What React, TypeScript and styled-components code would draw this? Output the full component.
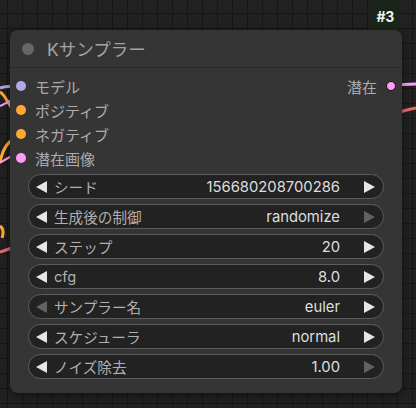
import React from "react";
import styled, { createGlobalStyle } from "styled-components";

const GlobalStyle = createGlobalStyle`
  html, body {
    margin: 0;
    padding: 0;
    background: #202020;
  }
  body {
    font-family: "Inter", "Noto Sans CJK JP", sans-serif;
  }
`;

const Canvas = styled.div`
  position: relative;
  width: 416px;
  height: 408px;
  overflow: hidden;
  box-sizing: border-box;
  padding: 30px 14px 0 10px;
  background-color: #212121;
  background-image:
    linear-gradient(#161616 1px, transparent 1px),
    linear-gradient(90deg, #161616 1px, transparent 1px);
  background-size: 15px 15px;
  background-position: -8px -2px;
`;

const Wires = styled.svg`
  position: absolute;
  left: 0;
  top: 0;
  pointer-events: none;
`;

const Badge = styled.div`
  position: absolute;
  top: 2px;
  right: 17px;
  padding: 5px;
  background: #182518;
  border-radius: 4px 4px 0 0;
  color: #f2f2f2;
  font-size: 14px;
  font-weight: 700;
  line-height: 19px;
  letter-spacing: -0.3px;
`;

const Node = styled.div`
  position: relative;
  width: 392px;
  background: #353535;
  border-radius: 8px;
  box-shadow: 0 2px 8px rgba(0, 0, 0, 0.5);
  padding-bottom: 14px;
`;

const TitleBar = styled.div`
  height: 37px;
  display: flex;
  align-items: center;
  gap: 13px;
  padding-left: 12px;
  border-bottom: 1px solid #2a2a2a;
`;

const TitleDot = styled.span`
  width: 12px;
  height: 12px;
  border-radius: 50%;
  background: #666;
`;

const TitleText = styled.span`
  color: #a3a3a3;
  font-size: 17.5px;
`;

const Slots = styled.div`
  padding-top: 6px;
`;

const SlotRow = styled.div`
  height: 24px;
  display: flex;
  align-items: center;
  justify-content: space-between;
  padding: 0 6px;
`;

const Slot = styled.div`
  display: flex;
  align-items: center;
  gap: 9px;
  color: #ababab;
  font-size: 15px;
`;

const Dot = styled.span<{ $color: string; $outlined?: boolean }>`
  width: 10px;
  height: 10px;
  border-radius: 50%;
  background: ${(p) => p.$color};
  box-sizing: border-box;
  border: ${(p) => (p.$outlined ? "1px solid #111" : "none")};
`;

const Widgets = styled.div`
  display: flex;
  flex-direction: column;
  gap: 5px;
  padding: 4px 18px 0;
`;

const Widget = styled.div`
  height: 25px;
  box-sizing: border-box;
  display: flex;
  align-items: center;
  border: 1px solid #5c5c5c;
  border-radius: 13px;
  background: #222;
  padding: 0 8px 0 7px;
`;

const Arrow = styled.span<{ $dim?: boolean; $right?: boolean }>`
  width: 0;
  height: 0;
  border-top: 6px solid transparent;
  border-bottom: 6px solid transparent;
  ${(p) =>
    p.$right
      ? `border-left: 11px solid ${p.$dim ? "#626262" : "#e6e6e6"};`
      : `border-right: 11px solid ${p.$dim ? "#626262" : "#e6e6e6"};`}
`;

const Label = styled.span`
  color: #b0b0b0;
  font-size: 14.6px;
  margin-left: 7px;
  flex: 1;
`;

const Value = styled.span`
  color: #dedede;
  font-size: 14.8px;
  margin-right: 24px;
`;

type WidgetRow = {
  label: string;
  value: string;
  leftDim?: boolean;
  rightDim?: boolean;
};

const widgets: WidgetRow[] = [
  { label: "シード", value: "156680208700286" },
  { label: "生成後の制御", value: "randomize", rightDim: true },
  { label: "ステップ", value: "20" },
  { label: "cfg", value: "8.0" },
  { label: "サンプラー名", value: "euler", leftDim: true },
  { label: "スケジューラ", value: "normal" },
  { label: "ノイズ除去", value: "1.00", rightDim: true },
];

const inputs = [
  { name: "モデル", color: "#b7a7e8" },
  { name: "ポジティブ", color: "#ffa931" },
  { name: "ネガティブ", color: "#ffa931" },
  { name: "潜在画像", color: "#ff9cf9" },
];

export default function App() {
  return (
    <Canvas>
      <GlobalStyle />
      <Wires width={416} height={408}>
        <path d="M0 88 C6 86 12 86 21 86" stroke="#b7a7e8" strokeWidth="3" fill="none" />
        <path d="M0 92 C6 96 8 104 12 108" stroke="#ffa931" strokeWidth="3" fill="none" />
        <path d="M12 140 C4 146 2 154 0 162" stroke="#ffa931" strokeWidth="3" fill="none" />
        <path d="M0 106 C4 104 8 102 12 100" stroke="#ff9cf9" strokeWidth="2" fill="none" />
        <path d="M0 163 C4 160 8 158 12 156" stroke="#ff9cf9" strokeWidth="2" fill="none" />
        <path d="M0 226 C3 228 4 232 2 238" stroke="#ffa931" strokeWidth="3" fill="none" />
        <path d="M0 252 C4 251 8 249 12 248" stroke="#e66b6b" strokeWidth="3" fill="none" />
        <path d="M391 85 L416 84" stroke="#ff9cf9" strokeWidth="3" fill="none" />
        <path d="M400 112 C406 110 411 109 416 108" stroke="#e66b6b" strokeWidth="3" fill="none" />
      </Wires>
      <Badge>#3</Badge>
      <Node>
        <TitleBar>
          <TitleDot />
          <TitleText>Kサンプラー</TitleText>
        </TitleBar>
        <Slots>
          {inputs.map((input, i) => (
            <SlotRow key={input.name}>
              <Slot>
                <Dot $color={input.color} />
                {input.name}
              </Slot>
              {i === 0 && (
                <Slot>
                  潜在
                  <Dot $color="#ff9cf9" $outlined />
                </Slot>
              )}
            </SlotRow>
          ))}
        </Slots>
        <Widgets>
          {widgets.map((w) => (
            <Widget key={w.label}>
              <Arrow $dim={w.leftDim} />
              <Label>{w.label}</Label>
              <Value>{w.value}</Value>
              <Arrow $right $dim={w.rightDim} />
            </Widget>
          ))}
        </Widgets>
      </Node>
    </Canvas>
  );
}
